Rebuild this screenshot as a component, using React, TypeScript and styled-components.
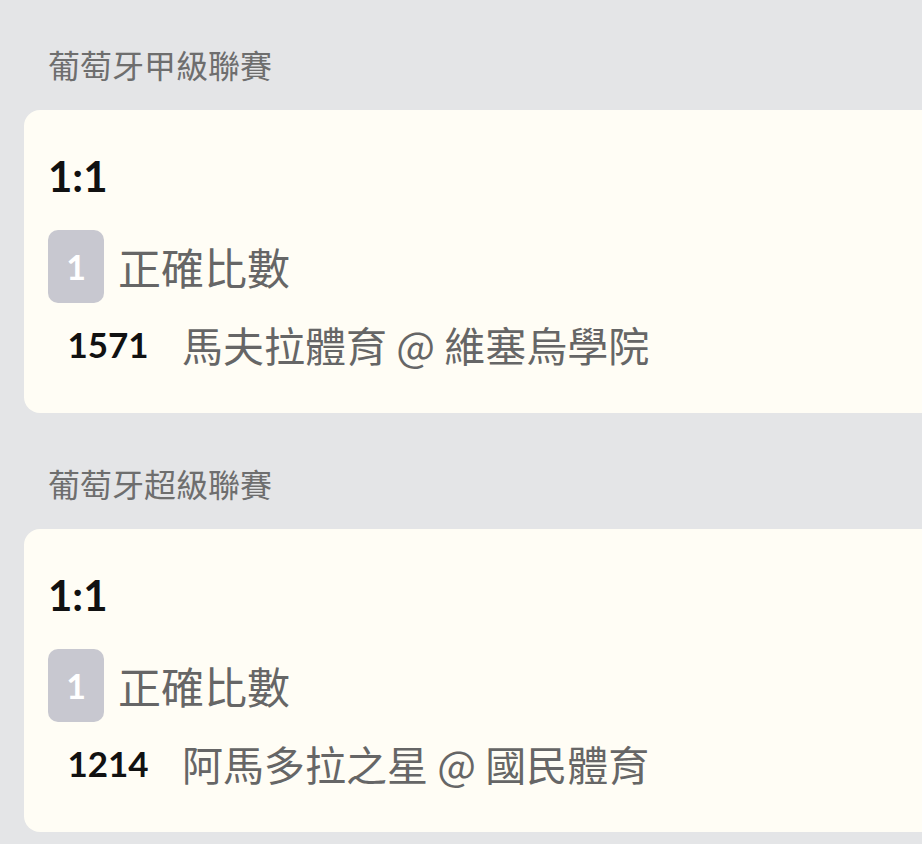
import { createGlobalStyle, styled } from "styled-components";

const GlobalStyle = createGlobalStyle`
  html, body {
    margin: 0;
    padding: 0;
    background-color: #e4e5e7;
    overflow-x: hidden;
  }
  body {
    font-family: "Lato", "Noto Sans CJK TC", sans-serif;
  }
`;

const Page = styled.div`
  padding: 40px 0 0 24px;
  min-height: 844px;
  box-sizing: border-box;
`;

const Section = styled.section`
  margin-bottom: 46px;
`;

const LeagueTitle = styled.h2`
  margin: 0 0 22px 24px;
  font-family: "Noto Sans CJK TC", sans-serif;
  font-size: 32px;
  font-weight: 400;
  line-height: 48px;
  color: #6e6e6e;
`;

const Card = styled.div`
  margin-right: -40px;
  padding: 40px 0 44px 24px;
  background-color: #fffdf5;
  border-radius: 16px;
  display: flex;
  flex-direction: column;
`;

const Score = styled.div`
  font-size: 42px;
  font-weight: 700;
  line-height: 52px;
  color: #111;
`;

const BetRow = styled.div`
  display: flex;
  align-items: center;
  gap: 14px;
  margin-top: 28px;
`;

const Badge = styled.span`
  width: 56px;
  height: 73px;
  border-radius: 10px;
  background-color: #c8c8d0;
  color: #fff;
  font-family: "Lato", sans-serif;
  font-size: 34px;
  font-weight: 700;
  line-height: 1;
  display: flex;
  align-items: center;
  justify-content: center;
`;

const BetType = styled.span`
  font-family: "Noto Sans CJK TC", sans-serif;
  font-size: 43px;
  line-height: 1;
  color: #666;
`;

const MatchRow = styled.div`
  display: flex;
  align-items: center;
  margin-top: 16px;
  height: 50px;
`;

const MatchNo = styled.span`
  width: 120px;
  text-align: center;
  font-size: 35px;
  font-weight: 700;
  color: #111;
`;

const Teams = styled.span`
  margin-left: 14px;
  font-family: "Noto Sans CJK TC", sans-serif;
  font-size: 41px;
  color: #666;
  white-space: nowrap;
`;

type Bet = {
  league: string;
  score: string;
  type: string;
  matchNo: string;
  home: string;
  away: string;
};

const bets: Bet[] = [
  {
    league: "葡萄牙甲級聯賽",
    score: "1:1",
    type: "正確比數",
    matchNo: "1571",
    home: "馬夫拉體育",
    away: "維塞烏學院",
  },
  {
    league: "葡萄牙超級聯賽",
    score: "1:1",
    type: "正確比數",
    matchNo: "1214",
    home: "阿馬多拉之星",
    away: "國民體育",
  },
];

function App() {
  return (
    <>
      <GlobalStyle />
      <Page>
        {bets.map((bet) => (
          <Section key={bet.matchNo}>
            <LeagueTitle>{bet.league}</LeagueTitle>
            <Card>
              <Score>{bet.score}</Score>
              <BetRow>
                <Badge>1</Badge>
                <BetType>{bet.type}</BetType>
              </BetRow>
              <MatchRow>
                <MatchNo>{bet.matchNo}</MatchNo>
                <Teams>
                  {bet.home} @ {bet.away}
                </Teams>
              </MatchRow>
            </Card>
          </Section>
        ))}
      </Page>
    </>
  );
}

export default App;
